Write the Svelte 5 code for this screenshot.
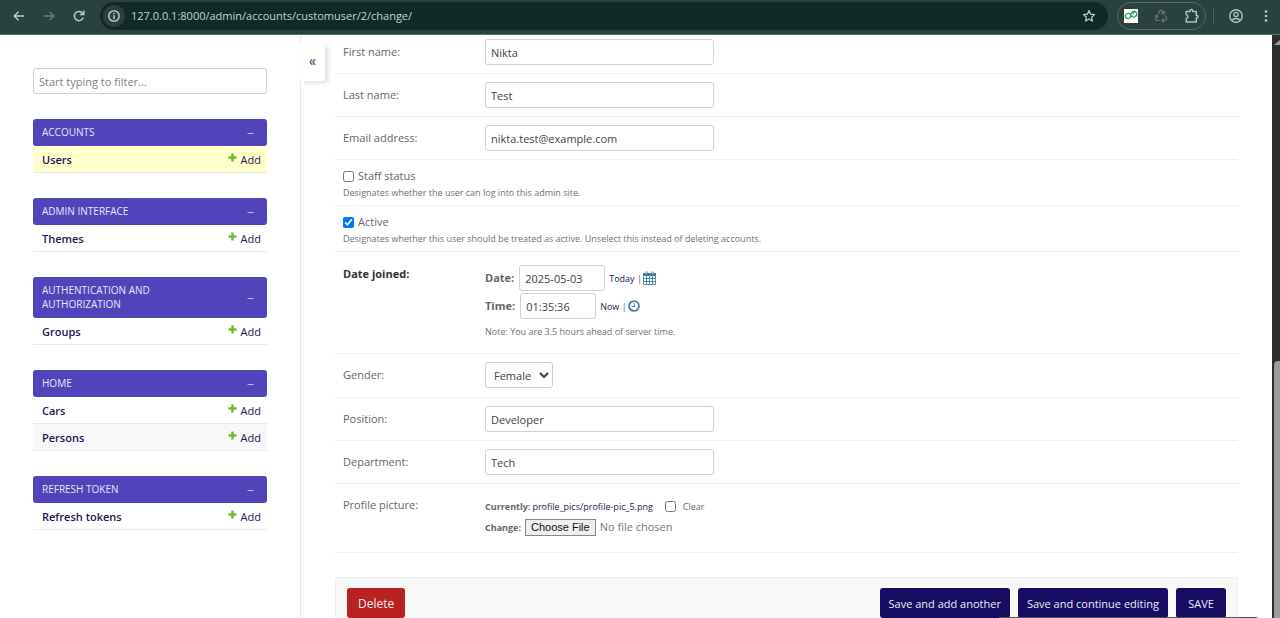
<script>
  const apps = [
    { name: 'Accounts', models: ['Users'] },
    { name: 'Admin Interface', models: ['Themes'] },
    { name: 'Authentication and Authorization', models: ['Groups'] },
    { name: 'Home', models: ['Cars', 'Persons'] },
    { name: 'Refresh Token', models: ['Refresh tokens'] }
  ];
  const current = 'Users';
  let filter = $state('');
  let user = $state({
    first: 'Nikta',
    last: 'Test',
    email: 'nikta.test@example.com',
    staff: false,
    active: true,
    date: '2025-05-03',
    time: '01:35:36',
    gender: 'Female',
    position: 'Developer',
    department: 'Tech',
    clear: false
  });
</script>

{#snippet textRow(id, label, key, type = 'text')}
  <div class="row">
    <label class="name" for={id}>{label}</label>
    <input class="field wide" {id} {type} bind:value={user[key]} />
  </div>
{/snippet}

<div class="window">
  <header class="toolbar">
    <nav class="history">
      <button aria-label="Back"><svg width="14" height="14" viewBox="0 0 14 14" fill="none" stroke="#b9ccc8" stroke-width="1.4"><path d="M12 7H2.5M6.5 2.7 2.2 7l4.3 4.3" /></svg></button>
      <button aria-label="Forward"><svg width="14" height="14" viewBox="0 0 14 14" fill="none" stroke="#667d79" stroke-width="1.4"><path d="M2 7h9.5M7.5 2.7 11.8 7l-4.3 4.3" /></svg></button>
      <button aria-label="Reload"><svg width="14" height="14" viewBox="0 0 14 14" fill="none" stroke="#b9ccc8" stroke-width="1.5"><path d="M11.3 8.6A4.6 4.6 0 1 1 10.6 4.2L11.6 5.3" /><path d="M11.8 1.6v4H7.9" /></svg></button>
    </nav>
    <div class="omnibox">
      <button class="info" aria-label="Site information"><svg width="14" height="14" viewBox="0 0 14 14" fill="none" stroke="#d5dfdd" stroke-width="1.3"><circle cx="7" cy="7" r="5.2" /><path d="M7 6.3v3.6M7 4v1.3" /></svg></button>
      <input class="url" aria-label="Address" value="127.0.0.1:8000/admin/accounts/customuser/2/change/" />
      <button aria-label="Bookmark"><svg width="14" height="14" viewBox="0 0 14 14" fill="none" stroke="#c3d2cf" stroke-width="1.2" stroke-linejoin="round"><path d="m7 1.6 1.6 3.6 3.9.4-2.9 2.6.8 3.9L7 10.1l-3.4 2 .8-3.9-2.9-2.6 3.9-.4z" /></svg></button>
    </div>
    <div class="extensions">
      <button aria-label="Link extension"><svg width="14" height="14" viewBox="0 0 14 14" fill="none"><path fill="#fff" d="M0 0h14v14H0z" /><g stroke="#1fa055" stroke-width="1.3"><ellipse cx="4" cy="7" rx="2.700" ry="2.500" transform="rotate(-25 4 7)" /><ellipse cx="9.800" cy="5.300" rx="3" ry="2.700" transform="rotate(-25 9.800 5.300)" /><path d="M8.500 5.500 11 1.500" /></g></svg></button>
      <button aria-label="Recycle extension"><svg width="14" height="14" viewBox="0 0 14 14" fill="none" stroke="#697471" stroke-width="1.3"><path d="m4 4.800 2-3.300h2l1.700 2.800M10 1.700v2.800H7.300M11 6.500l1.700 3-1 1.900H8M9.600 9.500 7.700 11.400l1.900 2M5.500 11.400H2.200l-1-1.900 1.900-3M.8 7l2.400-.8.8 2.500" /></svg></button>
      <button aria-label="Extensions"><svg width="16" height="16" viewBox="0 0 16 16" fill="none" stroke="#a9c4be" stroke-width="1.5" stroke-linejoin="round"><path d="M2.200 3.400h3.900V2.900a1.300 1.300 0 0 1 2.600 0v.5h3.600v4h.5a1.300 1.300 0 0 1 0 2.600h-.5v4H2.200v-3.600c2.400-.3 2.400-3.300 0-3.600z" /></svg></button>
    </div>
    <span class="divider"></span>
    <button class="profile" aria-label="Profile"><svg width="16" height="16" viewBox="0 0 16 16" fill="none" stroke="#a9c4be" stroke-width="1.400"><circle cx="8" cy="8" r="6.200" /><circle cx="8" cy="6.500" r="2.100" /><path d="M3.800 12.300c2-2.400 6.400-2.400 8.400 0" /></svg></button>
    <button class="more" aria-label="Menu"><svg width="4" height="14" viewBox="0 0 4 14" fill="#b9ccc8"><circle cx="2" cy="2.500" r="1.300" /><circle cx="2" cy="7" r="1.300" /><circle cx="2" cy="11.500" r="1.300" /></svg></button>
  </header>

  <div class="page">
    <aside>
      <input class="field filter" aria-label="Filter navigation items" placeholder="Start typing to filter..." bind:value={filter} />
      {#each apps as app}
        <section class="module">
          <h2><a href="#app">{app.name}</a><span>–</span></h2>
          <ul>
            {#each app.models as model}
              <li class:current={model === current}>
                <a class="model" href="#model">{model}</a>
                <a class="add" href="#add"><svg width="9" height="9" viewBox="0 0 9 9" fill="#6cbc2c"><path d="M3.300.500h2.400v2.800h2.800v2.400H5.700v2.800H3.300V5.700H.500V3.300h2.800z" /></svg>Add</a>
              </li>
            {/each}
          </ul>
        </section>
      {/each}
      <button class="toggle" aria-label="Toggle navigation">«</button>
    </aside>

    <main>
      <form>
        {@render textRow('first', 'First name:', 'first')}
        {@render textRow('last', 'Last name:', 'last')}
        {@render textRow('email', 'Email address:', 'email', 'email')}
        <div class="row check">
          <label><input type="checkbox" bind:checked={user.staff} />Staff status</label>
          <p class="help">Designates whether the user can log into this admin site.</p>
        </div>
        <div class="row check">
          <label><input type="checkbox" bind:checked={user.active} />Active</label>
          <p class="help">Designates whether this user should be treated as active. Unselect this instead of deleting accounts.</p>
        </div>
        <div class="row joined">
          <span class="name required">Date joined:</span>
          <div>
            <div class="when">
              <label for="date">Date:</label>
              <input class="field date" id="date" bind:value={user.date} />
              <span class="links"><a href="#today">Today</a> |</span>
              <svg width="13" height="14" viewBox="0 0 13 14" fill="none" stroke="#417f9f"><path fill="#417f9f" stroke="none" d="M0 2h13v3H0z" /><path d="M.5 3v10.500h12V3M3.500 5v8M6.500 5v8M9.500 5v8M1 7.500h11M1 10.500h11" stroke-width=".9" /><path d="M3.500.5v3M9.500.5v3" stroke-width="2" /><path d="M3.500.5v2.500M9.500.5v2.500" stroke="#fff" stroke-width=".6" /></svg>
            </div>
            <div class="when">
              <label for="time">Time:</label>
              <input class="field time" id="time" bind:value={user.time} />
              <span class="links"><a href="#now">Now</a> |</span>
              <svg width="12" height="12" viewBox="0 0 12 12" fill="none" stroke="#417f9f"><circle cx="6" cy="6" r="4.900" stroke-width="1.900" /><path d="M6.300 3.200v3.300H3.800" stroke-width="1.100" /></svg>
            </div>
            <p class="help note">Note: You are 3.5 hours ahead of server time.</p>
          </div>
        </div>
        <div class="row gender">
          <label class="name" for="gender">Gender:</label>
          <select class="field" id="gender" bind:value={user.gender}><option>Female</option><option>Male</option></select>
        </div>
        {@render textRow('position', 'Position:', 'position')}
        {@render textRow('department', 'Department:', 'department')}
        <div class="row picture">
          <label class="name" for="picture">Profile picture:</label>
          <div>
            <div class="file"><b>Currently:</b><a href="#picture">profile_pics/profile-pic_5.png</a><label class="clear"><input type="checkbox" bind:checked={user.clear} />Clear</label></div>
            <div class="file"><b>Change:</b><input type="file" id="picture" /></div>
          </div>
        </div>
        <div class="submit">
          <button type="button" class="delete">Delete</button>
          <button type="button">Save and add another</button>
          <button type="button">Save and continue editing</button>
          <button type="button">SAVE</button>
        </div>
      </form>
    </main>
    <div class="scrollbar"><span class="up"></span><span class="thumb"></span></div>
  </div>
  <span class="edge"></span>
</div>

<style>
  :global(body) { margin: 0; overflow: hidden; }
  * { box-sizing: border-box; }
  .window { position: relative; height: 100vh; display: flex; flex-direction: column; overflow: hidden; background: #fff; color: #666; font: 11px/14px "Open Sans", "Noto Sans", sans-serif; }
  button, input, select { font: inherit; color: inherit; }
  button { border: 0; padding: 0; background: none; }
  a { color: #1f1653; text-decoration: none; }
  svg { display: block; flex: none; }
  h2, ul, p { margin: 0; padding: 0; }

  .toolbar { flex: none; height: 35px; padding: 1px 12px 4px; display: flex; align-items: center; background: #29423e; border-bottom: 1px solid #62716e; }
  .history { display: flex; gap: 16px; margin-right: 14px; }
  .omnibox { flex: 1; height: 28px; padding: 0 12px 0 3px; border-radius: 14px; background: #102a27; display: flex; align-items: center; gap: 6px; }
  .info { width: 22px; height: 22px; border-radius: 11px; background: #29403d; display: grid; place-items: center; }
  .url { flex: 1; min-width: 0; border: 0; padding: 0; outline: 0; background: none; color: #c5d3d0; font-size: 11px; line-height: 16px; }
  .extensions { height: 28px; margin-left: 9px; padding: 0 5px 0 6px; border: 1px solid #586b68; border-radius: 14px; display: flex; align-items: center; gap: 16px; }
  .divider { width: 1px; height: 14px; margin: 0 14px 0 7px; background: #486a63; }
  .more { margin-left: 20px; }

  .page { flex: 1; min-height: 0; display: flex; }
  aside { position: relative; flex: none; width: 301px; padding: 33px 33px 0; border-right: 1px solid #eaeaea; }
  .field { height: 26px; padding: 1px 5px 0; border: 1px solid #d0d0d0; border-radius: 3px; background: #fff; color: #444; }
  .filter { width: 100%; margin-bottom: 25px; }
  .filter::placeholder { color: #808080; }
  .module { margin-bottom: 25px; }
  h2 { display: flex; align-items: center; justify-content: space-between; padding: 6px 13px 7px 9px; border-radius: 3px; background: #5144bb; color: #e6e4f5; font-size: 10px; line-height: 14px; font-weight: 400; text-transform: uppercase; }
  h2 a { color: inherit; max-width: 150px; }
  h2 span { font-size: 14px; font-weight: 300; }
  ul { list-style: none; }
  li { height: 27px; padding: 2px 6px 0 9px; border-bottom: 1px solid #eaeaea; display: flex; align-items: center; justify-content: space-between; }
  li:nth-child(even) { background: #f8f8f8; }
  li.current { background: #ffffcc; }
  .model { font-weight: 600; }
  .add { display: flex; gap: 4px; }
  .toggle { position: absolute; top: 9px; left: 300px; width: 25px; height: 37px; padding-bottom: 3px; z-index: 1; background: #fff; border-radius: 0 3px 3px 0; box-shadow: 3px 2px 5px #0002; color: #30275f; font-size: 14px; }

  main { flex: 1; min-width: 0; padding: 0 34px; overflow: hidden; }
  .row { display: flex; align-items: flex-start; padding: 8px; border-bottom: 1px solid #ededed; }
  .row:first-child { padding-top: 4px; }
  .name { width: 142px; flex: none; padding-top: 6px; }
  .wide { width: 229px; }
  .check { display: block; padding-bottom: 4px; }
  .check label { display: flex; align-items: center; gap: 4px; line-height: 16px; }
  input[type="checkbox"] { width: 11px; height: 11px; margin: 0; }
  .help { font-size: 9px; line-height: 17px; color: #707070; }
  .joined { padding: 13px 8px; }
  .required { padding-top: 2px; color: #333; font-weight: 700; }
  .when { display: flex; align-items: center; margin-bottom: 2px; }
  .when label { font-weight: 700; margin-right: 5px; }
  .date { width: 86px; }
  .time { width: 76px; }
  .links { margin: 1px 1px 0 4px; font-size: 9px; }
  .note { margin-top: 4px; }
  .gender { padding-bottom: 9px; }
  select.field { width: 68px; padding: 1px 0 0 4px; }
  .picture { padding: 8px 8px 14px; }
  .picture > div { padding-top: 4px; }
  .file { height: 21px; display: flex; align-items: center; font-size: 9px; }
  .file a { margin-left: 2px; }
  .file input[type="file"] { margin-left: 4px; font-size: 11px; color: #777; }
  input::file-selector-button { height: 17px; padding: 0 5px; margin-right: 4px; border: 1px solid #888; border-radius: 0; background: #efefef; color: #111; font: 11px/15px "Liberation Sans", sans-serif; }
  .clear { display: flex; align-items: center; gap: 7px; margin-left: 12px; }
  .submit { margin-top: 24px; padding: 10px 11px; border: 1px solid #eee; border-radius: 3px; background: #f8f8f8; display: flex; gap: 8px; }
  .submit button { height: 30px; min-width: 50px; padding: 1px 9px 0; border-radius: 3px; background: #160c62; color: #eeedf6; white-space: nowrap; }
  .submit .delete { margin-right: auto; padding: 1px 11px 0; background: #ba2121; font-size: 12px; }

  .scrollbar { flex: none; width: 8px; padding-left: 2px; background: #2d2d2c; display: flex; flex-direction: column; justify-content: space-between; }
  .up { margin-top: 5px; border: solid transparent; border-width: 0 0 5px 6px; border-bottom-color: #9c9c9c; }
  .thumb { height: 44%; border-radius: 4px 0 0 0; background: #9b9b9b; }
  .edge { position: absolute; right: 23px; bottom: 0; width: 258px; height: 1px; background: #555; }
</style>
